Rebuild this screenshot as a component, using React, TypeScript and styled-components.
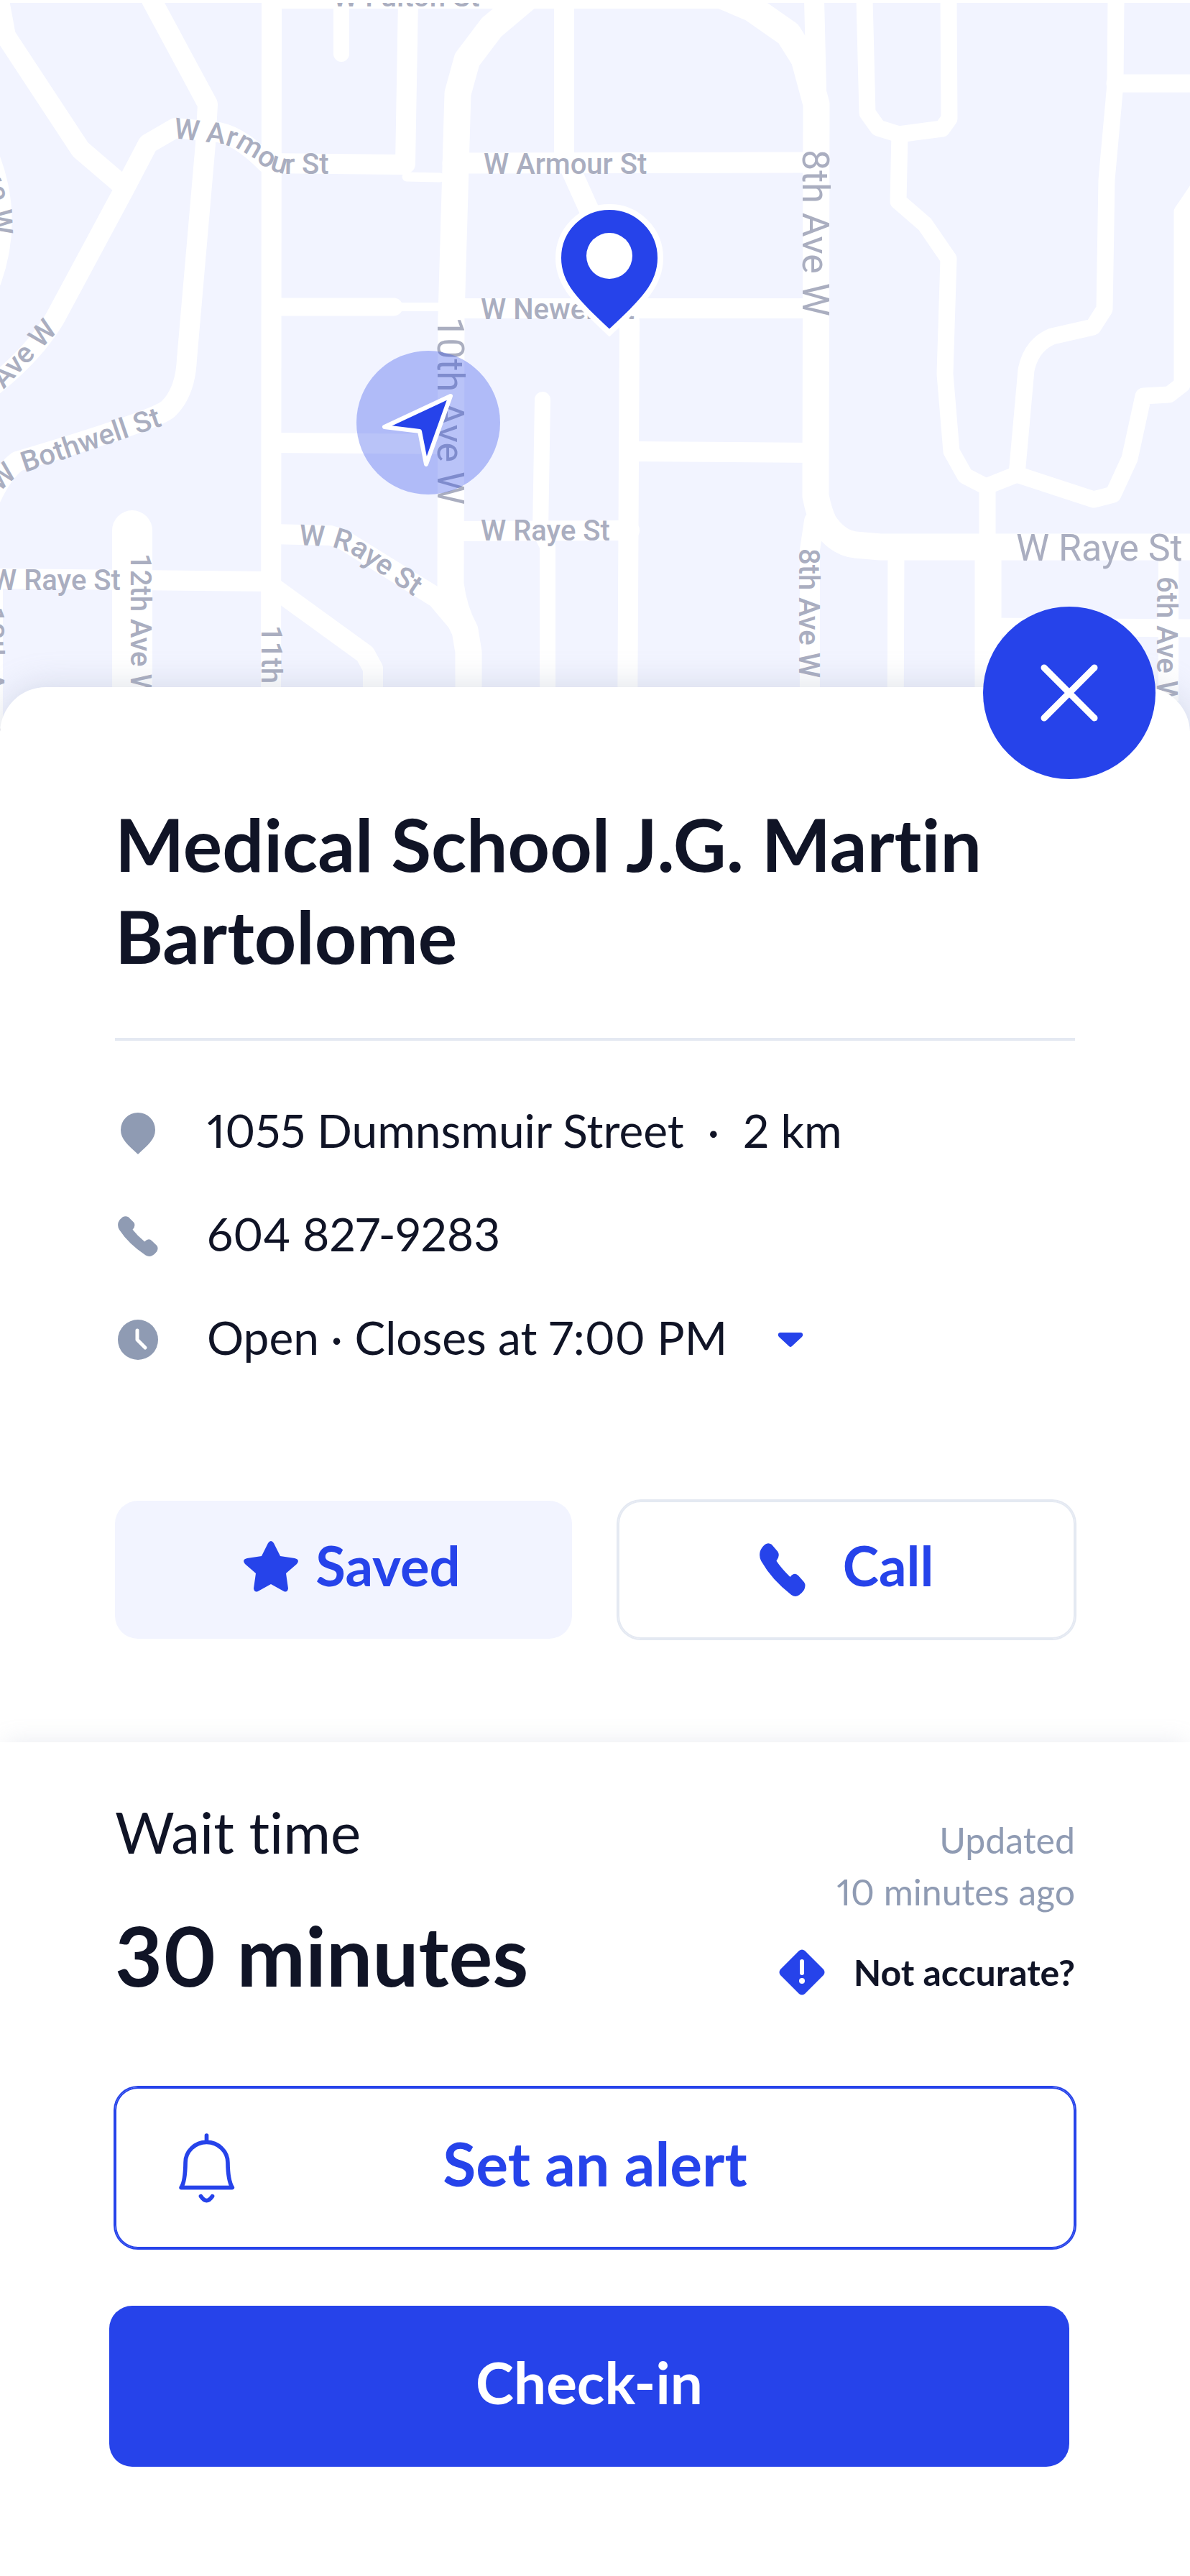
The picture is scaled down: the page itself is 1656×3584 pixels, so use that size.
import React from 'react';
import styled, { createGlobalStyle } from 'styled-components';

const ink = '#101426';
const blue = '#2643EA';
const mist = '#F2F4FF';
const line = '#E4E9F2';
const slate = '#8F9BB3';
const road = '#FFFFFF';
const label = '#AAAEC0';

const Global = createGlobalStyle`
  * { box-sizing: border-box; }
  body {
    margin: 0;
    background: #ffffff;
    color: ${ink};
    font-family: Lato, "Open Sans", sans-serif;
    font-variant-ligatures: none;
    font-variant-numeric: proportional-nums;
  }
  h1, h2, p, ul { margin: 0; padding: 0; }
  button {
    font-family: inherit;
    font-variant-ligatures: none;
    cursor: pointer;
  }
`;

const Page = styled.main`
  width: 100%;
  overflow: hidden;
`;

const MapArea = styled.section`
  height: 1020px;
  padding-top: 4px;
`;

const MapSvg = styled.svg`
  display: block;
  width: 100%;
  height: 1016px;
  background: ${mist};
  font-variant-numeric: normal;
`;

const Sheet = styled.article`
  position: relative;
  margin-top: -64px;
  background: #ffffff;
  border-radius: 64px 64px 0 0;
  box-shadow: 0 0 48px rgba(143, 155, 179, 0.32);
`;

const CloseButton = styled.button`
  position: absolute;
  top: -112px;
  right: 48px;
  width: 240px;
  height: 240px;
  border: 0;
  border-radius: 50%;
  background: ${blue};
  display: grid;
  place-items: center;
  padding: 0;
`;

const Details = styled.section`
  padding: 154px 160px 144px;
`;

const Title = styled.h1`
  font-size: 102px;
  line-height: 128px;
  font-weight: 700;
  padding-bottom: 78px;
  border-bottom: 4px solid ${line};
`;

const InfoList = styled.ul`
  list-style: none;
  padding: 56px 0 0;
  display: flex;
  flex-direction: column;
`;

const InfoRow = styled.li`
  height: 144px;
  display: flex;
  align-items: center;
  gap: 64px;

  > svg { flex: none; }
`;

const InfoText = styled.span`
  padding-bottom: 6px;
  font-size: 64px;
  line-height: 80px;
  white-space: pre;
`;

const HoursToggle = styled.button`
  border: 0;
  background: none;
  padding: 0;
  width: 48px;
  height: 48px;
  display: grid;
  place-items: center;
`;

const Actions = styled.div`
  display: grid;
  grid-template-columns: 1fr 1fr;
  gap: 64px;
  padding-top: 152px;
`;

const ButtonText = styled.span`
  padding-bottom: 12px;
`;

const ActionButton = styled.button<{ $filled?: boolean }>`
  height: 192px;
  border: 0;
  border-radius: 32px;
  background: ${(p) => (p.$filled ? mist : '#ffffff')};
  box-shadow: ${(p) => (p.$filled ? 'none' : `inset 0 0 0 2px ${line}, 0 0 0 2px ${line}`)};
  color: ${blue};
  font-size: 76px;
  line-height: 96px;
  font-weight: 700;
  padding: 0 0 0 ${(p) => (p.$filled ? 24 : 0)}px;
  display: flex;
  align-items: center;
  justify-content: center;
  gap: ${(p) => (p.$filled ? 24 : 52)}px;
`;

const Wait = styled.section`
  padding-bottom: 152px;
  box-shadow: 0 -8px 32px -8px rgba(143, 155, 179, 0.2);
`;

const WaitBody = styled.div`
  padding: 76px 160px 80px;
`;

const WaitSummary = styled.div`
  display: flex;
  justify-content: space-between;
`;

const WaitColumn = styled.div`
  display: flex;
  flex-direction: column;
`;

const WaitLabel = styled.h2`
  font-size: 80px;
  line-height: 96px;
  font-weight: 400;
`;

const WaitValue = styled.p`
  padding-top: 56px;
  font-size: 114px;
  line-height: 136px;
  font-weight: 700;
`;

const Updated = styled.p`
  padding-top: 24px;
  font-size: 50px;
  line-height: 72px;
  font-weight: 400;
  color: ${slate};
  text-align: right;
`;

const ReportButton = styled.button`
  margin-top: 40px;
  border: 0;
  background: none;
  padding: 0;
  display: flex;
  align-items: center;
  justify-content: flex-end;
  gap: 40px;
  color: ${ink};
  font-size: 50px;
  line-height: 72px;
  font-weight: 700;
`;

const AlertButton = styled.button`
  margin-top: 116px;
  width: 100%;
  height: 224px;
  border: 0;
  border-radius: 32px;
  box-shadow: inset 0 0 0 2px ${blue}, 0 0 0 2px ${blue};
  background: #ffffff;
  color: ${blue};
  font-size: 84px;
  line-height: 96px;
  font-weight: 700;
  padding: 0 88px;
  display: grid;
  grid-template-columns: 80px 1fr 80px;
  align-items: center;
`;

const CheckInBar = styled.div`
  padding: 0 168px 0 152px;
`;

const CheckInButton = styled.button`
  width: 100%;
  height: 224px;
  border: 0;
  border-radius: 32px;
  background: ${blue};
  color: #ffffff;
  font-size: 80px;
  line-height: 96px;
  font-weight: 700;
  display: grid;
  place-items: center;
`;

const roads: Array<[number, string]> = [
  [28, 'M-2 -4 L8 50 L112 208 L168 256'],
  [28, 'M211 0 L289 145 L286 200 L260 500 Q258 545 235 568 Q225 582 24 642 Q0 660 -20 710'],
  [28, 'M-20 545 Q20 515 50 480 Q70 455 78 440 L172 265 L206 200 L244 178 L296 183 Q330 185 371 227 L561 229'],
  [28, 'M378 0 L377 1030'],
  [28, 'M378 -2 L1000 -2'],
  [22, 'M475 0 L475 75'],
  [28, 'M568 0 L564 228'],
  [13, 'M566 246 L612 247'],
  [37, 'M735 -5 L684 38 L650 83 L637 130 L628 440 L627 813 Q632 850 647 877 L652 907 L652 1030'],
  [28, 'M785 0 L785 215 L822 297 L850 380 L876 447 L873 1030'],
  [29, 'M630 227 L1137 226'],
  [25, 'M378 427 L548 427'],
  [12, 'M548 427 L612 427'],
  [28, 'M630 429 L1137 429'],
  [37, 'M1000 -8 L1047 12 L1097 47 L1119 82 L1136 145 L1135 690 Q1140 715 1147 728 Q1165 755 1190 758 L1225 761 L1670 761'],
  [28, 'M1133 0 L1136 123'],
  [28, 'M1133 725 L1127 765 L1127 1030'],
  [23, 'M1203 0 L1207 157 L1222 178 L1251 187 L1311 179 L1321 165 L1320 0'],
  [23, 'M1252 187 L1250 280 L1287 312 L1320 360 L1315 520 L1324 628 L1343 662 L1372 677 L1415 660 L1522 695 L1549 688 L1572 638 L1591 551 L1627 549 L1645 535 L1645 295 L1672 255'],
  [23, 'M1415 660 L1428 515 Q1435 480 1464 468 L1521 455 L1537 430 L1540 250 L1552 117 L1553 0'],
  [25, 'M1552 116 L1670 116'],
  [23, 'M1374 677 L1374 761'],
  [37, 'M1375 761 L1375 1030'],
  [25, 'M1375 872 L1670 874'],
  [23, 'M1247 761 L1246 1030'],
  [28, 'M1626 761 L1626 1030'],
  [28, 'M876 628 L1135 630'],
  [28, 'M627 739 L876 738'],
  [22, 'M755 556 L752 740 L762 760 L762 1030'],
  [28, 'M378 743 L460 745 L476 750 L608 832 L640 870'],
  [28, 'M378 616 L627 618'],
  [56, 'M184 738 L184 1030'],
  [28, 'M-10 805 L377 809'],
  [28, 'M377 815 L508 910 L519 930 L519 1030'],
  [28, 'M-10 820 L-10 1030'],
  [28, 'M-18 210 Q20 300 -12 390'],
];

interface StreetLabel {
  text: string;
  x: number;
  y: number;
  size: number;
  angle?: number;
  major?: boolean;
}

const streetLabels: StreetLabel[] = [
  { text: 'W Fulton St', x: 463, y: 9, size: 40 },
  { text: 'W Armour St', x: 673, y: 242, size: 40 },
  { text: 'W Newell St', x: 669, y: 444, size: 40 },
  { text: 'W Raye St', x: 669, y: 752, size: 40 },
  { text: 'W Raye St', x: -12, y: 821, size: 40 },
  { text: 'W Raye St', x: 1414, y: 780, size: 52, major: true },
  { text: '10th Ave W', x: 609, y: 441, size: 52, angle: 90, major: true },
  { text: '8th Ave W', x: 1117, y: 208, size: 52, angle: 90, major: true },
  { text: '8th Ave W', x: 1112, y: 763, size: 40, angle: 90 },
  { text: '6th Ave W', x: 1610, y: 802, size: 40, angle: 90 },
  { text: '12th Ave W', x: 182, y: 770, size: 40, angle: 90 },
  { text: '11th Ave W', x: 364, y: 870, size: 40, angle: 90 },
  { text: '13th Ave W', x: -23, y: 844, size: 40, angle: 90 },
];

const curvedLabels = [
  { id: 'armour', text: 'W Armour St', path: 'M241 192 L300 199 Q332 204 354 222 Q378 242 404 242 L480 242' },
  { id: 'raye', text: 'W Raye St', path: 'M416 758 L450 760 Q476 762 496 775 L620 860' },
  { id: 'bothwell', text: 'W Bothwell St', path: 'M0 686 Q16 666 36 657 L280 574' },
  { id: 'ave-left', text: 'Ave W', path: 'M5 542 L100 440' },
  { id: 'ave-edge', text: 'Ave W', path: 'M-40 222 Q-14 250 -12 290 L-9 350' },
];

interface PhoneIconProps {
  width: number;
  height: number;
  color: string;
}

function PhoneIcon({ width, height, color }: PhoneIconProps) {
  return (
    <svg width={width} height={height} viewBox="49 47 191 221" preserveAspectRatio="none" aria-hidden="true">
      <path
        fill={color}
        d="M72 52 Q85 43 99 52 L124 81 Q136 98 119 121 Q142 155 176 187 Q195 164 211 183 L234 209 Q243 222 234 241 Q224 256 213 263 Q197 273 181 262 Q100 200 56 122 Q46 104 51 82 Q56 65 72 52 Z"
      />
    </svg>
  );
}

const PhoneSlot = styled.div`
  width: 64px;
  display: flex;
  justify-content: center;
`;

function StreetMap() {
  return (
    <MapSvg viewBox="0 4 1656 1016" preserveAspectRatio="xMidYMin slice" role="img" aria-label="Street map">
      <g fill="none" stroke={road} strokeLinejoin="round" strokeLinecap="round">
        {roads.map(([width, d]) => (
          <path key={d} d={d} strokeWidth={width} />
        ))}
      </g>
      <g fill={label} fontFamily="Roboto, sans-serif">
        {streetLabels.map((s) => (
          <text
            key={`${s.text}-${s.x}-${s.y}`}
            transform={`translate(${s.x} ${s.y}) rotate(${s.angle ?? 0})`}
            fontSize={s.size}
            fontWeight={s.major ? 400 : 500}
          >
            {s.text}
          </text>
        ))}
        {curvedLabels.map((c) => (
          <React.Fragment key={c.id}>
            <path id={c.id} d={c.path} fill="none" />
            <text fontSize={40} fontWeight={500}>
              <textPath href={`#${c.id}`}>{c.text}</textPath>
            </text>
          </React.Fragment>
        ))}
      </g>
      <circle cx="596" cy="588" r="100" fill={blue} fillOpacity="0.32" />
      <path
        d="M627 551 L535 594 L584 600 L593 646 Z"
        fill={blue}
        stroke="#ffffff"
        strokeWidth="6"
        strokeLinejoin="round"
      />
      <path
        d="M848 463 C800 418 777 396 777 359 A71 71 0 0 1 919 359 C919 396 896 418 848 463 Z"
        fill={blue}
        stroke="#ffffff"
        strokeWidth="8"
      />
      <circle cx="848" cy="356" r="32" fill="#ffffff" />
    </MapSvg>
  );
}

export default function App() {
  return (
    <Page>
      <Global />
      <MapArea>
        <StreetMap />
      </MapArea>
      <Sheet>
        <CloseButton type="button" aria-label="Close">
          <svg width="80" height="80" viewBox="0 0 80 80" aria-hidden="true">
            <path d="M5 5 L75 75 M75 5 L5 75" stroke="#ffffff" strokeWidth="9" strokeLinecap="round" />
          </svg>
        </CloseButton>
        <Details>
          <Title>Medical School J.G. Martin Bartolome</Title>
          <InfoList>
            <InfoRow>
              <svg width="64" height="64" viewBox="0 0 64 64" aria-hidden="true">
                <path fill={slate} d="M32 62 C18 49 8 41 8 28 A24 24 0 0 1 56 28 C56 41 46 49 32 62 Z" />
              </svg>
              <InfoText>{'1055 Dumnsmuir Street  ·  2 km'}</InfoText>
            </InfoRow>
            <InfoRow>
              <PhoneSlot>
                <PhoneIcon width={56} height={56} color={slate} />
              </PhoneSlot>
              <InfoText>604 827-9283</InfoText>
            </InfoRow>
            <InfoRow>
              <svg width="64" height="64" viewBox="0 0 64 64" aria-hidden="true">
                <circle cx="32" cy="32" r="28" fill={slate} />
                <path d="M31 19 V32 L42 43" fill="none" stroke="#ffffff" strokeWidth="5" strokeLinecap="round" strokeLinejoin="round" />
              </svg>
              <InfoText>Open · Closes at 7:00 PM</InfoText>
              <HoursToggle type="button" aria-label="Show opening hours">
                <svg width="36" height="20" viewBox="0 0 36 20" aria-hidden="true">
                  <path fill={blue} d="M3 0 H33 Q37 2 34 6 L20 19 Q18 21 16 19 L2 6 Q-1 2 3 0 Z" />
                </svg>
              </HoursToggle>
            </InfoRow>
          </InfoList>
          <Actions>
            <ActionButton type="button" $filled>
              <svg width="76" height="80" viewBox="0 0 76 80" aria-hidden="true">
                <path fill={blue} d="M34 3 Q38 -3 42 3 L51 21 L71 24 Q79 26 74 32 L59 45 L62 66 Q61 72 56 70 L38 60 L20 70 Q15 72 14 66 L17 45 L2 32 Q-3 26 5 24 L25 21 Z" />
              </svg>
              <ButtonText>Saved</ButtonText>
            </ActionButton>
            <ActionButton type="button">
              <PhoneIcon width={64} height={74} color={blue} />
              <ButtonText>Call</ButtonText>
            </ActionButton>
          </Actions>
        </Details>
        <Wait>
          <WaitBody>
            <WaitSummary>
              <WaitColumn>
                <WaitLabel>Wait time</WaitLabel>
                <WaitValue>30 minutes</WaitValue>
              </WaitColumn>
              <WaitColumn>
                <Updated>
                  Updated
                  <br />
                  10 minutes ago
                </Updated>
                <ReportButton type="button">
                  <svg width="64" height="64" viewBox="0 0 64 64" aria-hidden="true">
                    <path fill={blue} d="M28 2 Q32 -1 36 2 L62 28 Q65 32 62 36 L36 62 Q32 65 28 62 L2 36 Q-1 32 2 28 Z" />
                    <path d="M32 17 V33" stroke="#ffffff" strokeWidth="6" strokeLinecap="round" />
                    <circle cx="32" cy="44" r="4" fill="#ffffff" />
                  </svg>
                  Not accurate?
                </ReportButton>
              </WaitColumn>
            </WaitSummary>
            <AlertButton type="button">
              <svg width="79" height="99" viewBox="56 50 236 296" aria-hidden="true">
                <g fill="none" stroke={blue} strokeWidth="17" strokeLinecap="round" strokeLinejoin="round">
                  <path d="M174 62 V82 M68 279 Q85 255 86 175 A88 85 0 0 1 262 175 Q263 250 281 279 Z" />
                  <path d="M150 315 Q174 351 198 315" />
                </g>
              </svg>
              <ButtonText>Set an alert</ButtonText>
            </AlertButton>
          </WaitBody>
          <CheckInBar>
            <CheckInButton type="button">
              <ButtonText>Check-in</ButtonText>
            </CheckInButton>
          </CheckInBar>
        </Wait>
      </Sheet>
    </Page>
  );
}
